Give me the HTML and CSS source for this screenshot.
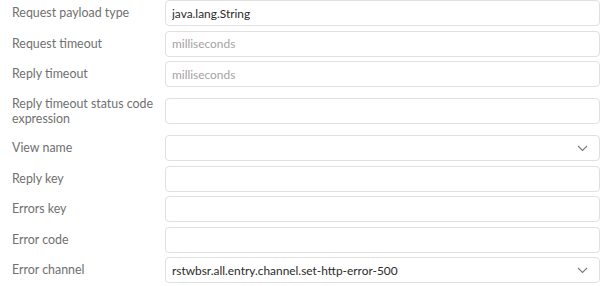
FILE: index.html
```html
<!DOCTYPE html>
<html lang="en">
<head>
    <meta charset="UTF-8">
    <title>Endpoint settings</title>
    <link rel="stylesheet" href="styles.css">
</head>
<body>
    <!-- Gateway endpoint form -->
    <form class="settings-form">
        <div class="form-row">
            <label class="form-label">Request payload type</label>
            <input class="form-input" type="text" value="java.lang.String">
        </div>
        <div class="form-row">
            <label class="form-label">Request timeout</label>
            <input class="form-input" type="text" placeholder="milliseconds">
        </div>
        <div class="form-row">
            <label class="form-label">Reply timeout</label>
            <input class="form-input" type="text" placeholder="milliseconds">
        </div>
        <div class="form-row">
            <label class="form-label">Reply timeout status code expression</label>
            <input class="form-input" type="text">
        </div>
        <div class="form-row">
            <label class="form-label">View name</label>
            <div class="form-select">
                <span class="select-value"></span>
                <svg class="chevron" width="11" height="7" viewBox="0 0 11 7"><path d="M1 1l4.5 4.5L10 1" fill="none" stroke="#7a7a7a" stroke-width="1.1"/></svg>
            </div>
        </div>
        <div class="form-row">
            <label class="form-label">Reply key</label>
            <input class="form-input" type="text">
        </div>
        <div class="form-row">
            <label class="form-label">Errors key</label>
            <input class="form-input" type="text">
        </div>
        <div class="form-row">
            <label class="form-label">Error code</label>
            <input class="form-input" type="text">
        </div>
        <div class="form-row">
            <label class="form-label">Error channel</label>
            <div class="form-select">
                <span class="select-value">rstwbsr.all.entry.channel.set-http-error-500</span>
                <svg class="chevron" width="11" height="7" viewBox="0 0 11 7"><path d="M1 1l4.5 4.5L10 1" fill="none" stroke="#7a7a7a" stroke-width="1.1"/></svg>
            </div>
        </div>
    </form>
</body>
</html>
```

FILE: styles.css
```css
/* Basic Styling */
body {
    margin: 0;
    background-color: #fff;
    font-family: Lato, "Open Sans", sans-serif;
    font-size: 12px;
    color: #333;
}

.settings-form {
    width: 600px;
    padding-left: 12px;
    box-sizing: border-box;
}

/* One label + field per row */
.form-row {
    display: flex;
    align-items: center;
    margin-bottom: 4.5px;
}

.form-label {
    width: 153px;
    flex-shrink: 0;
    padding: 4px 0;
    padding-right: 6px;
    box-sizing: border-box;
    font-size: 12.4px;
    line-height: 15.5px;
    color: #707070;
}

.form-input,
.form-select {
    flex: 1;
    height: 26px;
    box-sizing: border-box;
    border: 1px solid #e0e0e0;
    border-radius: 4px;
    padding: 0 6px;
    font-family: inherit;
    font-size: 11.9px;
    color: #2b2b2b;
    background-color: #fff;
    margin: 0;
}

.form-input::placeholder {
    color: #a3a3a3;
}

.form-select {
    display: flex;
    align-items: center;
    justify-content: space-between;
    padding-right: 11px;
}

.chevron {
    flex-shrink: 0;
}
```
